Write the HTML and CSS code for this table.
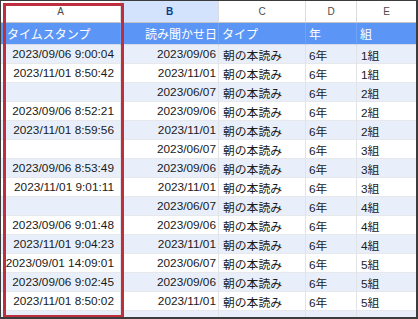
FILE: index.html
```html
<!DOCTYPE html>
<html lang="ja">
<head>
<meta charset="utf-8">
<link rel="stylesheet" href="styles.css">
</head>
<body>
<div class="frame">
  <div class="sheet">
    <div class="colhead">A</div>
    <div class="colhead sel">B</div>
    <div class="colhead">C</div>
    <div class="colhead">D</div>
    <div class="colhead">E</div>

    <div class="hd a">タイムスタンプ</div>
    <div class="hd b">読み聞かせ日</div>
    <div class="hd c">タイプ</div>
    <div class="hd d">年</div>
    <div class="hd e">組</div>

    <div class="cell a alt">2023/09/06 9:00:04</div><div class="cell b alt">2023/09/06</div><div class="cell c alt">朝の本読み</div><div class="cell d alt">6年</div><div class="cell e alt">1組</div>
    <div class="cell a">2023/11/01 8:50:42</div><div class="cell b">2023/11/01</div><div class="cell c">朝の本読み</div><div class="cell d">6年</div><div class="cell e">1組</div>
    <div class="cell a alt"></div><div class="cell b alt">2023/06/07</div><div class="cell c alt">朝の本読み</div><div class="cell d alt">6年</div><div class="cell e alt">2組</div>
    <div class="cell a">2023/09/06 8:52:21</div><div class="cell b">2023/09/06</div><div class="cell c">朝の本読み</div><div class="cell d">6年</div><div class="cell e">2組</div>
    <div class="cell a alt">2023/11/01 8:59:56</div><div class="cell b alt">2023/11/01</div><div class="cell c alt">朝の本読み</div><div class="cell d alt">6年</div><div class="cell e alt">2組</div>
    <div class="cell a"></div><div class="cell b">2023/06/07</div><div class="cell c">朝の本読み</div><div class="cell d">6年</div><div class="cell e">3組</div>
    <div class="cell a alt">2023/09/06 8:53:49</div><div class="cell b alt">2023/09/06</div><div class="cell c alt">朝の本読み</div><div class="cell d alt">6年</div><div class="cell e alt">3組</div>
    <div class="cell a">2023/11/01 9:01:11</div><div class="cell b">2023/11/01</div><div class="cell c">朝の本読み</div><div class="cell d">6年</div><div class="cell e">3組</div>
    <div class="cell a alt"></div><div class="cell b alt">2023/06/07</div><div class="cell c alt">朝の本読み</div><div class="cell d alt">6年</div><div class="cell e alt">4組</div>
    <div class="cell a">2023/09/06 9:01:48</div><div class="cell b">2023/09/06</div><div class="cell c">朝の本読み</div><div class="cell d">6年</div><div class="cell e">4組</div>
    <div class="cell a alt">2023/11/01 9:04:23</div><div class="cell b alt">2023/11/01</div><div class="cell c alt">朝の本読み</div><div class="cell d alt">6年</div><div class="cell e alt">4組</div>
    <div class="cell a"><span>2023/09/01 14:09:01</span></div><div class="cell b">2023/06/07</div><div class="cell c">朝の本読み</div><div class="cell d">6年</div><div class="cell e">5組</div>
    <div class="cell a alt">2023/09/06 9:02:45</div><div class="cell b alt">2023/09/06</div><div class="cell c alt">朝の本読み</div><div class="cell d alt">6年</div><div class="cell e alt">5組</div>
    <div class="cell a">2023/11/01 8:50:02</div><div class="cell b">2023/11/01</div><div class="cell c">朝の本読み</div><div class="cell d">6年</div><div class="cell e">5組</div>
    <div class="cell a alt"></div><div class="cell b alt"></div><div class="cell c alt"></div><div class="cell d alt"></div><div class="cell e alt"></div>
  </div>
  <div class="highlight"></div>
</div>
</body>
</html>
```

FILE: styles.css
```css
html, body {
  margin: 0;
  padding: 0;
  background: #ffffff;
}

.frame {
  position: relative;
  width: 418px;
  height: 319px;
  box-sizing: border-box;
  border: 1px solid #3c3c3c;
  border-right-width: 2px;
  border-bottom-width: 2px;
  overflow: hidden;
  font-family: "Liberation Sans", "Noto Sans CJK JP", sans-serif;
}

.sheet {
  display: grid;
  grid-template-columns: 120px 98px 87px 51px 60px;
  grid-template-rows: 22px 22px repeat(15, 19px);
}

.colhead {
  display: flex;
  align-items: center;
  justify-content: center;
  font-size: 10px;
  color: #4a4a4a;
  background: #ffffff;
  border-right: 1px solid #dcdcdc;
  border-bottom: 1px solid #c4c4c4;
  box-sizing: border-box;
}

.colhead.sel {
  background: #d3e3fd;
  color: #0b3a8a;
  font-weight: bold;
}

.hd {
  display: flex;
  align-items: center;
  background: #5b95f5;
  color: #ffffff;
  font-size: 12px;
  font-family: "Noto Sans CJK JP", "Liberation Sans", sans-serif;
  border-right: 1px solid #6fa2f5;
  border-bottom: 1px solid #d9dde3;
  box-sizing: border-box;
  padding: 0 3px;
  white-space: nowrap;
  overflow: hidden;
}

.hd.a { padding-left: 6px; }
.hd.b { justify-content: flex-end; padding-right: 1px; }

.cell {
  display: flex;
  align-items: center;
  font-size: 11.8px;
  color: #1a1a1a;
  background: #ffffff;
  border-right: 1px solid #e2e3e5;
  border-bottom: 1px solid #e6e8ec;
  box-sizing: border-box;
  padding: 0 3px;
  white-space: nowrap;
  overflow: hidden;
}

.cell.alt {
  background: #e8effb;
}

.cell.a {
  justify-content: flex-end;
  padding-right: 6px;
}

.cell.b {
  justify-content: flex-end;
  padding-right: 2px;
}

.cell.c { padding-left: 4px; }
.cell.d { padding-left: 3px; }
.cell.e { padding-left: 4px; }

.highlight {
  position: absolute;
  left: 2px;
  top: 2px;
  width: 121px;
  height: 315px;
  box-sizing: border-box;
  border: 3px solid #bd2f3e;
  pointer-events: none;
}
```
